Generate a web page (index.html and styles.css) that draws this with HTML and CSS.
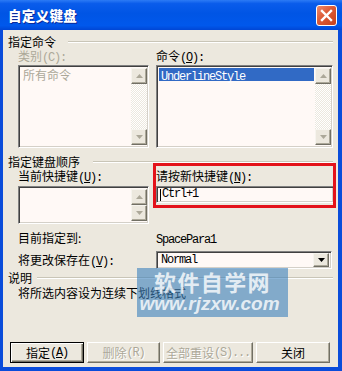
FILE: index.html
```html
<!DOCTYPE html>
<html>
<head>
<meta charset="utf-8">
<link rel="stylesheet" href="styles.css">
</head>
<body>
<div class="window">
  <div class="titlebar">
    <span class="title">自定义键盘</span>
    <div class="close">
      <svg width="21" height="21" viewBox="0 0 21 21"><path d="M6 6 L15 15 M15 6 L6 15" stroke="#fff" stroke-width="2.4" stroke-linecap="square"/></svg>
    </div>
  </div>
  <div class="client">
    <div class="group g1"><span>指定命令</span><i class="rule"></i></div>
    <div class="grid top">
      <div class="lbl dis">类别<span class="m">(C):</span></div>
      <div class="lbl">命令<span class="m">(<u>O</u>):</span></div>
      <div class="list">
        <div class="items"><div class="item dis">所有命令</div></div>
        <div class="sb">
          <div class="arrow"><svg width="7" height="4" viewBox="0 0 7 4"><polygon points="3.5,0 7,4 0,4" fill="#ACA899"/></svg></div>
          <div class="track"></div>
          <div class="arrow"><svg width="7" height="4" viewBox="0 0 7 4"><polygon points="0,0 7,0 3.5,4" fill="#ACA899"/></svg></div>
        </div>
      </div>
      <div class="list">
        <div class="items"><div class="item sel"><span class="m">UnderlineStyle</span></div></div>
        <div class="sb">
          <div class="arrow"><svg width="7" height="4" viewBox="0 0 7 4"><polygon points="3.5,0 7,4 0,4" fill="#ACA899"/></svg></div>
          <div class="track"></div>
          <div class="arrow"><svg width="7" height="4" viewBox="0 0 7 4"><polygon points="0,0 7,0 3.5,4" fill="#ACA899"/></svg></div>
        </div>
      </div>
    </div>
    <div class="group g2"><span>指定键盘顺序</span><i class="rule"></i></div>
    <div class="grid mid">
      <div class="lbl">当前快捷键<span class="m">(<u>U</u>):</span></div>
      <div class="lbl">请按新快捷键<span class="m">(<u>N</u>):</span></div>
      <div class="list">
        <div class="items"></div>
        <div class="sb">
          <div class="arrow"><svg width="7" height="4" viewBox="0 0 7 4"><polygon points="3.5,0 7,4 0,4" fill="#ACA899"/></svg></div>
          <div class="track"></div>
          <div class="arrow"><svg width="7" height="4" viewBox="0 0 7 4"><polygon points="0,0 7,0 3.5,4" fill="#ACA899"/></svg></div>
        </div>
      </div>
      <div class="input"><i class="caret"></i><span class="m">Ctrl+1</span></div>
    </div>
    <div class="grid row1">
      <div class="lbl">目前指定到:</div>
      <div class="lbl"><span class="m">SpacePara1</span></div>
    </div>
    <div class="grid row2">
      <div class="lbl">将更改保存在<span class="m">(<u>V</u>):</span></div>
      <div class="select">
        <span class="m">Normal</span>
        <div class="drop"><svg width="7" height="4" viewBox="0 0 7 4"><polygon points="0,0 7,0 3.5,4" fill="#000"/></svg></div>
      </div>
    </div>
    <div class="group g3"><span>说明</span><i class="rule"></i></div>
    <div class="desc">将所选内容设为连续下划线格式</div>
    <div class="buttons">
      <div class="btn def w1">指定<span class="m">(<u>A</u>)</span></div>
      <div class="btn disb w2">删除<span class="m">(R)</span></div>
      <div class="btn disb w3">全部重设<span class="m">(S)...</span></div>
      <div class="btn w4">关闭</div>
    </div>
    <div class="redbox"></div>
    <div class="watermark">
      <div class="wm1">软件自学网</div>
      <div class="wm2">www.rjzxw.com</div>
    </div>
  </div>
</div>
</body>
</html>
```
FILE: styles.css
```css
* { box-sizing: border-box; }
html, body { margin: 0; padding: 0; }
body {
  font-family: "Noto Sans CJK SC", sans-serif;
  font-size: 12px;
  color: #000;
}
.window {
  width: 342px;
  height: 371px;
  background: #0A4CDA;
  display: flex;
  flex-direction: column;
}
.titlebar {
  height: 30px;
  display: flex;
  align-items: center;
  padding: 0 5px 0 8px;
  background: linear-gradient(#2C7BF5 0, #0A5CEB 12%, #0055E5 45%, #0058EC 85%, #0046D5 100%);
}
.title {
  color: #fff;
  font-weight: 900;
  font-size: 13.5px;
  letter-spacing: 0.3px;
  text-shadow: 1px 1px 0 #0A2A9A;
}
.close {
  margin-left: auto;
  width: 21px;
  height: 21px;
  border: 1px solid #fff;
  border-radius: 3px;
  background: linear-gradient(135deg, #EE8A6A 0%, #DC5A36 45%, #C7411C 100%);
  display: flex;
  align-items: center;
  justify-content: center;
}
.close svg { margin: -1px; }
.client {
  flex: 1;
  margin: 0 4px 4px 3px;
  background: #ECE8DE;
  display: flex;
  flex-direction: column;
  padding: 5px 5px 4px 5px;
  position: relative;
}
.m {
  font-family: "Liberation Mono", monospace;
  font-size: 12px;
  letter-spacing: -1.2px;
}
.group {
  display: flex;
  align-items: center;
  height: 14px;
  line-height: 14px;
}
.rule {
  flex: 1;
  height: 2px;
  border-top: 1px solid #C9C5B7;
  border-bottom: 1px solid #FFFFFF;
}
.g1 .rule { margin-left: 12px; }
.g2 { margin-top: 7px; }
.g2 .rule { margin-left: 13px; }
.g3 { margin-top: 2px; }
.g3 .rule { margin-left: 5px; }
.grid {
  display: grid;
  grid-template-columns: 131px 177px;
  column-gap: 7px;
  margin-left: 10px;
}
.top { grid-template-rows: 16px 83px; }
.mid { grid-template-rows: 17px 38px; }
.row1 { margin-top: 7px; height: 14px; }
.row2 { margin-top: 6px; height: 18px; align-items: center; }
.lbl { line-height: 14px; height: 14px; white-space: nowrap; }
.dis { color: #ACA899; }
.list, .input, .select {
  background: #FFF9F6;
  border: 1px solid;
  border-color: #808080 #FFFFFF #FFFFFF #808080;
  box-shadow: inset 1px 1px 0 #404040, inset -1px -1px 0 #D4D0C8;
}
.list {
  display: flex;
  padding: 2px 1px 2px 2px;
}
.items { flex: 1; padding-right: 1px; }
.item {
  height: 13px;
  line-height: 13px;
  padding-left: 2px;
  white-space: nowrap;
}
.sel { background: #316AC5; color: #fff; }
.sb {
  width: 16px;
  display: flex;
  flex-direction: column;
}
.track {
  flex: 1;
  background: repeating-conic-gradient(#FFFFFF 0 25%, #ECE8DE 0 50%) 0 0 / 2px 2px;
}
.arrow, .drop {
  width: 16px;
  height: 16px;
  background: #ECE8DE;
  border: 1px solid;
  border-color: #F6F4EE #716F64 #716F64 #F6F4EE;
  box-shadow: inset -1px -1px 0 #ACA899;
  display: flex;
  align-items: center;
  justify-content: center;
}
.input {
  height: 17px;
  width: 178px;
  padding: 0 0 0 3px;
  display: flex;
  align-items: center;
  line-height: 13px;
}
.caret {
  width: 1px;
  height: 12px;
  background: #000;
  margin-right: 1px;
}
.select {
  height: 18px;
  width: 176px;
  display: flex;
  align-items: center;
  padding: 2px 2px 2px 4px;
}
.select .m { flex: 1; }
.drop { height: 14px; width: 16px; }
.desc {
  margin-top: 1px;
  margin-left: 10px;
  line-height: 14px;
  height: 14px;
}
.buttons {
  margin-top: auto;
  display: flex;
  gap: 3px;
  padding-left: 2px;
}
.btn {
  height: 21px;
  background: #ECE8DE;
  border: 1px solid;
  border-color: #FFFFFF #716F64 #716F64 #FFFFFF;
  box-shadow: inset -1px -1px 0 #ACA899;
  display: flex;
  align-items: center;
  justify-content: center;
  line-height: 14px;
  white-space: nowrap;
}
.def {
  border: 1px solid #000;
  box-shadow: inset 1px 1px 0 #FFFFFF, inset -1px -1px 0 #716F64, inset -2px -2px 0 #ACA899;
}
.disb { color: #ACA899; text-shadow: 1px 1px 0 #FFFFFF; }
.w1 { width: 74px; }
.w2 { width: 73px; }
.w3 { width: 90px; }
.w4 { width: 74px; }
.redbox {
  position: absolute;
  left: 150px;
  top: 133px;
  width: 183px;
  height: 45px;
  border: 3px solid #E3121A;
}
.watermark {
  position: absolute;
  left: 134px;
  top: 238px;
  width: 151px;
  height: 49px;
  background: rgba(60, 128, 188, 0.6);
  display: flex;
  flex-direction: column;
  align-items: center;
  color: rgba(255, 255, 255, 0.8);
}
.wm1 {
  font-weight: bold;
  font-size: 22px;
  letter-spacing: 1.4px;
  line-height: 24px;
  margin-top: 1px;
}
.wm2 {
  font-family: "Liberation Sans", sans-serif;
  font-weight: bold;
  font-style: italic;
  font-size: 19px;
  line-height: 20px;
  margin-top: 1px;
  margin-right: 6px;
}
```
